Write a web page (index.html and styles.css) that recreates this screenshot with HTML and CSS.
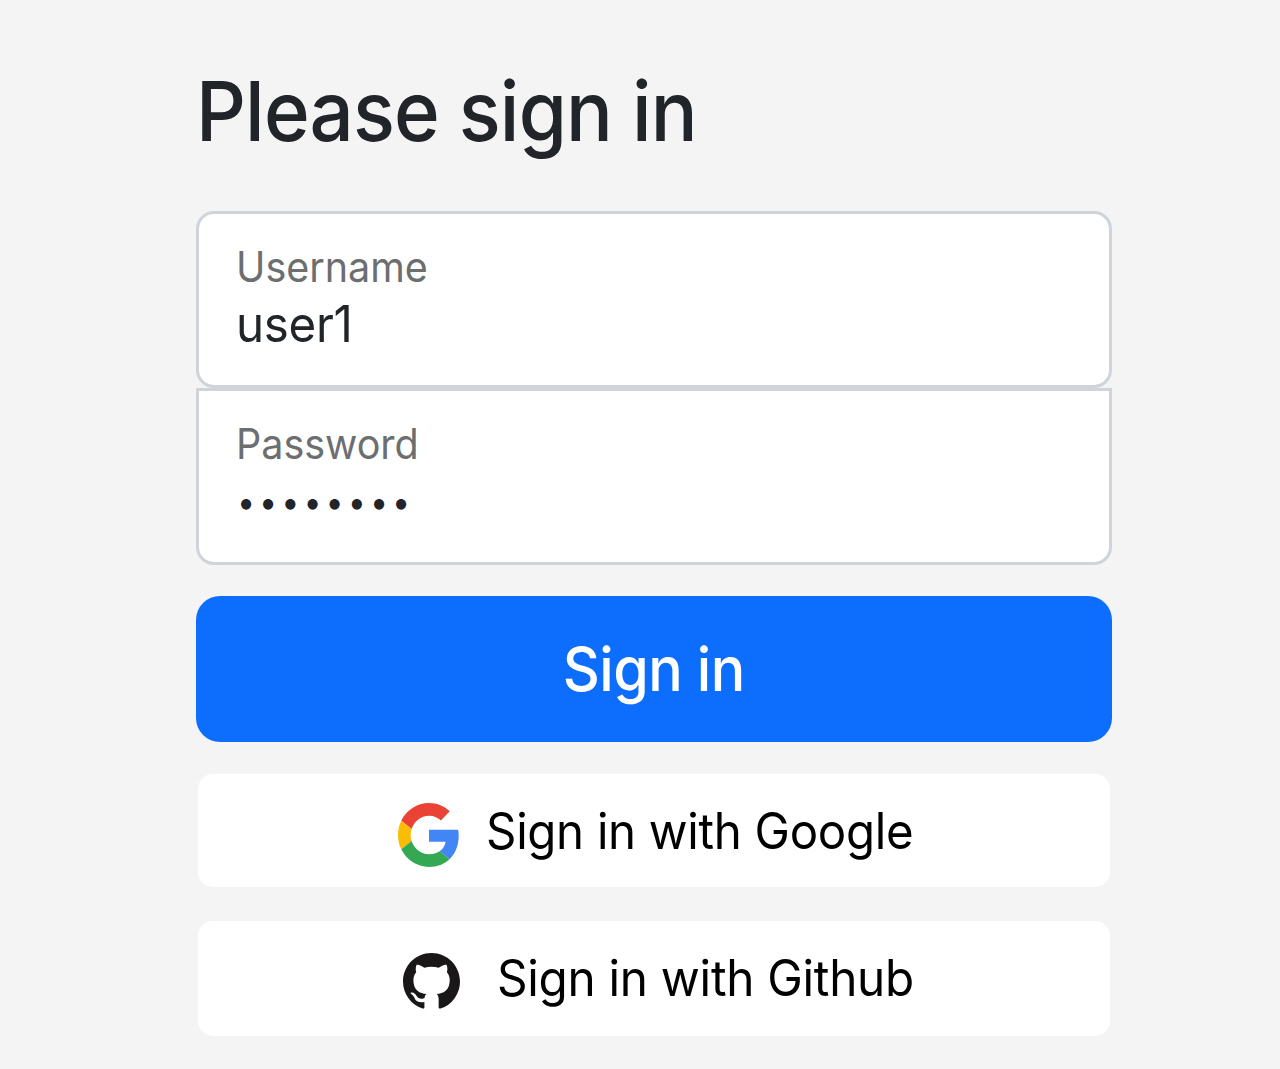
FILE: index.html
```html
<!DOCTYPE html>
<html lang="en">
<head>
  <meta charset="UTF-8" />
  <meta name="viewport" content="width=device-width, initial-scale=1.0"/>
  <title>Please sign in</title>
  <link rel="stylesheet" href="styles.css">
</head>
<body>
  <form class="form-signin">
    <h1>Please sign in</h1>

    <div class="field field-username">
      <label for="username">Username</label>
      <input type="text" id="username" name="username" value="user1">
    </div>
    <div class="field field-password">
      <label for="password">Password</label>
      <input type="password" id="password" name="password" value="password">
    </div>

    <button type="submit" class="btn-primary"><span>Sign in</span></button>

    <a class="btn-social google" href="#">
      <svg viewBox="0 0 48 48" preserveAspectRatio="none" aria-hidden="true">
        <path fill="#EA4335" d="M24 9.5c3.54 0 6.71 1.22 9.21 3.6l6.85-6.85C35.9 2.38 30.47 0 24 0 14.62 0 6.51 5.38 2.56 13.22l7.98 6.19C12.43 13.72 17.74 9.5 24 9.5z"/>
        <path fill="#4285F4" d="M46.98 24.55c0-1.57-.15-3.09-.38-4.55H24v9.02h12.94c-.58 2.96-2.26 5.48-4.78 7.18l7.73 6c4.51-4.18 7.09-10.36 7.09-17.65z"/>
        <path fill="#FBBC05" d="M10.53 28.59c-.48-1.45-.76-2.99-.76-4.59s.27-3.14.76-4.59l-7.98-6.19C.92 16.46 0 20.12 0 24c0 3.88.92 7.54 2.56 10.78l7.97-6.19z"/>
        <path fill="#34A853" d="M24 48c6.48 0 11.93-2.13 15.89-5.81l-7.73-6c-2.15 1.45-4.92 2.3-8.16 2.3-6.26 0-11.57-4.22-13.47-9.91l-7.98 6.19C6.51 42.62 14.62 48 24 48z"/>
      </svg>
      <span>Sign in with Google</span>
    </a>

    <a class="btn-social github" href="#">
      <svg viewBox="0 0 16 16" preserveAspectRatio="none" aria-hidden="true">
        <path fill="#191717" d="M8 0C3.58 0 0 3.58 0 8c0 3.54 2.29 6.53 5.47 7.59.4.07.55-.17.55-.38 0-.19-.01-.82-.01-1.49-2.01.37-2.53-.49-2.69-.94-.09-.23-.48-.94-.82-1.13-.28-.15-.68-.52-.01-.53.63-.01 1.08.58 1.23.82.72 1.21 1.87.87 2.33.66.07-.52.28-.87.51-1.07-1.78-.2-3.64-.89-3.64-3.95 0-.87.31-1.59.82-2.15-.08-.2-.36-1.02.08-2.12 0 0 .67-.21 2.2.82.64-.18 1.32-.27 2-.27s1.36.09 2 .27c1.53-1.04 2.2-.82 2.2-.82.44 1.1.16 1.92.08 2.12.51.56.82 1.27.82 2.15 0 3.07-1.87 3.75-3.65 3.95.29.25.54.73.54 1.48 0 1.07-.01 1.93-.01 2.2 0 .21.15.46.55.38A8.01 8.01 0 0 0 16 8c0-4.42-3.58-8-8-8z"/>
      </svg>
      <span>Sign in with Github</span>
    </a>
  </form>
</body>
</html>
```
FILE: styles.css
```css
* {
  box-sizing: border-box;
}
body {
  margin: 0;
  background: #f4f4f4;
  color: #212529;
  font-family: Inter, "Liberation Sans", sans-serif;
}
.form-signin {
  width: 916px;
  margin-left: 196px;
  padding-top: 61px;
}
h1 {
  margin: 0 0 50px;
  font-size: 83px;
  font-weight: 500;
  line-height: 100px;
  letter-spacing: -0.9px;
  transform: scaleX(0.938);
  transform-origin: left;
}
.field {
  display: flex;
  flex-direction: column;
  height: 177px;
  padding: 29px 37px 0;
  background: #fff;
  border: 3px solid #ced4da;
  border-radius: 18px;
}
.field-password {
  border-top-left-radius: 0;
  border-top-right-radius: 0;
}
label {
  font-size: 42px;
  line-height: 48px;
  color: #6c6e70;
  transform: scaleX(0.94);
  transform-origin: left;
}
input {
  width: 100%;
  height: 60px;
  margin-top: 3px;
  padding: 0;
  border: 0;
  outline: none;
  background: transparent;
  color: #212529;
  font-family: inherit;
  font-size: 50px;
  letter-spacing: -0.3px;
  transform: scaleX(0.95);
  transform-origin: left;
}
.field-password input {
  padding-left: 1px;
  font-size: 34px;
  letter-spacing: 4.2px;
}
.btn-primary {
  width: 100%;
  height: 146px;
  margin-top: 31px;
  border: 0;
  border-radius: 24px;
  background: #0d6efd;
  color: #fff;
  font-family: inherit;
  font-size: 61px;
  font-weight: 500;
  letter-spacing: -0.6px;
}
.btn-primary span {
  display: inline-block;
  transform: scaleX(0.94);
}
.btn-social {
  display: flex;
  align-items: center;
  height: 113px;
  margin: 32px 2px 0;
  border-radius: 15px;
  background: #fff;
  color: #000;
  font-size: 50px;
  letter-spacing: -0.3px;
  text-decoration: none;
  white-space: nowrap;
}
.btn-social span {
  transform: scaleX(0.948);
  transform-origin: left;
}
.google svg {
  width: 62px;
  height: 64px;
  margin: 8px 26px 0 200px;
}
.github {
  height: 115px;
  margin-top: 34px;
}
.github svg {
  width: 57px;
  height: 57px;
  margin: 5px 37px 0 205px;
}
.github span {
  margin-top: -2px;
  transform: scaleX(0.954);
}
```
